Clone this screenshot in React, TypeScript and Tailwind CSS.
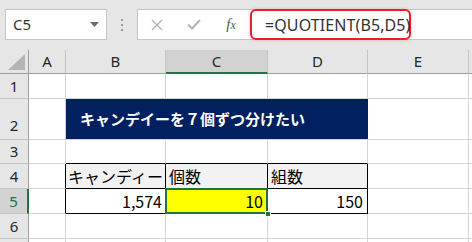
import React from "react";

const jp = { fontFamily: '"Noto Sans CJK JP", "Noto Sans", sans-serif' };
const ui = { fontFamily: '"Noto Sans", "Open Sans", sans-serif' };

function ColHead({ label, active, last }: { label: string; active?: boolean; last?: boolean }) {
  return (
    <div
      className={
        "flex items-center justify-center text-[15px] text-[#262626] " +
        (last ? "" : "border-r border-[#c4c4c4] ") +
        (active
          ? "bg-[#d2d2d2] border-b-2 border-b-[#217346] text-[#217346]"
          : "bg-[#e6e6e6] border-b border-b-[#9e9e9e]")
      }
      style={ui}
    >
      {label}
    </div>
  );
}

function RowHead({ n, active, bottom }: { n?: number; active?: boolean; bottom?: boolean }) {
  return (
    <div
      className={
        "flex justify-center text-[15px] border-b border-[#c4c4c4] " +
        (bottom ? "items-end pb-[3px] " : "items-center ") +
        (active
          ? "bg-[#d2d2d2] text-[#217346] border-r-2 border-r-[#217346]"
          : "bg-[#e6e6e6] text-[#262626] border-r border-r-[#9e9e9e]")
      }
      style={ui}
    >
      {n}
    </div>
  );
}

function Cell({
  className = "",
  children,
}: {
  className?: string;
  children?: React.ReactNode;
}) {
  return (
    <div className={"bg-white border-r border-b border-[#d4d4d4] " + className} style={jp}>
      {children}
    </div>
  );
}

export default function App() {
  return (
    <div className="w-[472px] h-[242px] overflow-hidden bg-[#e6e6e6]">
      {/* toolbar */}
      <div className="h-[50px] flex items-start pt-[9px] pl-[5px]">
        <div className="w-[102px] h-[31px] bg-white border border-[#c6c6c6] flex items-center justify-between pl-[7px] pr-[7px]">
          <span className="text-[15px] text-[#333]" style={ui}>C5</span>
          <svg width="9" height="5" viewBox="0 0 9 5">
            <path d="M0 0 L9 0 L4.5 5 Z" fill="#6b6b6b" />
          </svg>
        </div>
        <div className="w-[30px] h-[31px] flex flex-col items-center justify-center gap-[3px]">
          <div className="w-[2px] h-[2px] bg-[#9a9a9a]" />
          <div className="w-[2px] h-[2px] bg-[#9a9a9a]" />
          <div className="w-[2px] h-[2px] bg-[#9a9a9a]" />
        </div>
        <div className="flex-1 h-[31px] bg-white border border-[#c6c6c6] border-r-0 flex items-center">
          <div className="w-[36px] flex justify-center ml-[1px]">
            <svg width="12" height="12" viewBox="0 0 12 12">
              <path d="M1 1 L11 11 M11 1 L1 11" stroke="#b3b3b3" strokeWidth="1.4" />
            </svg>
          </div>
          <div className="w-[38px] flex justify-center">
            <svg width="14" height="11" viewBox="0 0 14 11">
              <path d="M1 5.5 L5 9.5 L13 1" stroke="#b3b3b3" strokeWidth="2" fill="none" />
            </svg>
          </div>
          <div className="w-[36px] flex justify-center">
            <span className="text-[15px] italic text-[#555]" style={{ fontFamily: '"Liberation Serif", serif' }}>
              f<span className="text-[12px]">x</span>
            </span>
          </div>
          <div className="ml-[1px] w-[161px] h-[31px] border-2 border-[#e8202a] rounded-[6px] flex items-center pl-[13px] shadow-[0_0_3px_rgba(232,32,42,0.35)]">
            <span className="text-[16px] text-[#333] tracking-[0.1px]" style={ui}>=QUOTIENT(B5,D5)</span>
          </div>
        </div>
      </div>

      {/* grid */}
      <div className="grid grid-cols-[29px_37px_100px_102px_100px_101px_3px] grid-rows-[24px_25px_41px_24px_25px_25px_25px_25px]">
        {/* header row */}
        <div className="bg-[#e6e6e6] border-r border-r-[#9e9e9e] border-b border-b-[#9e9e9e] relative">
          <svg className="absolute left-[8px] top-[4px]" width="17" height="16" viewBox="0 0 17 16">
            <path d="M17 0 L17 16 L0 16 Z" fill="#b4b4b4" />
          </svg>
        </div>
        <ColHead label="A" />
        <ColHead label="B" />
        <ColHead label="C" active />
        <ColHead label="D" />
        <ColHead label="E" />
        <div className="bg-[#e6e6e6] border-b border-b-[#9e9e9e]" />

        {/* row 1 */}
        <RowHead n={1} />
        <Cell />
        <Cell />
        <Cell />
        <Cell />
        <Cell />
        <Cell className="border-r-0" />

        {/* row 2 */}
        <RowHead n={2} bottom />
        <Cell />
        <div className="col-span-3 bg-[#002060] flex items-center pl-[14px] border-b border-[#d4d4d4]">
          <span className="text-white font-bold text-[15px]" style={jp}>
            キャンデイーを７個ずつ分けたい
          </span>
        </div>
        <Cell />
        <Cell className="border-r-0" />

        {/* row 3 */}
        <RowHead n={3} />
        <Cell />
        <Cell className="border-b-black" />
        <Cell className="border-b-black" />
        <Cell className="border-b-black" />
        <Cell />
        <Cell className="border-r-0" />

        {/* row 4 */}
        <RowHead n={4} />
        <Cell className="border-r-black" />
        <Cell className="!bg-[#f2f2f2] border-black flex items-center pl-[2px] text-[16px] text-black">
          キャンディー
        </Cell>
        <Cell className="!bg-[#f2f2f2] border-black flex items-center pl-[3px] text-[16px] text-black">
          個数
        </Cell>
        <Cell className="!bg-[#f2f2f2] border-black flex items-center pl-[3px] text-[16px] text-black">
          組数
        </Cell>
        <Cell />
        <Cell className="border-r-0" />

        {/* row 5 */}
        <RowHead n={5} active />
        <Cell className="border-r-black" />
        <Cell className="border-black flex items-center justify-end pr-[3px] text-[16px] text-black">
          1,574
        </Cell>
        <div className="relative bg-[#ffff00] border-r border-b border-black flex items-center justify-end pr-[4px] text-[16px] text-black" style={jp}>
          10
          <div className="absolute -left-[1px] -top-[1px] -right-[1px] -bottom-[1px] border-2 border-[#217346]" />
          <div className="absolute -right-[4px] -bottom-[4px] w-[6px] h-[6px] bg-[#217346] border border-white" />
        </div>
        <Cell className="border-black flex items-center justify-end pr-[4px] text-[16px] text-black">
          150
        </Cell>
        <Cell />
        <Cell className="border-r-0" />

        {/* row 6 */}
        <RowHead n={6} />
        <Cell />
        <Cell />
        <Cell />
        <Cell />
        <Cell />
        <Cell className="border-r-0" />

        {/* row 7 (cut off at the window edge) */}
        <RowHead />
        <Cell />
        <Cell />
        <Cell />
        <Cell />
        <Cell />
        <Cell className="border-r-0" />
      </div>
    </div>
  );
}
